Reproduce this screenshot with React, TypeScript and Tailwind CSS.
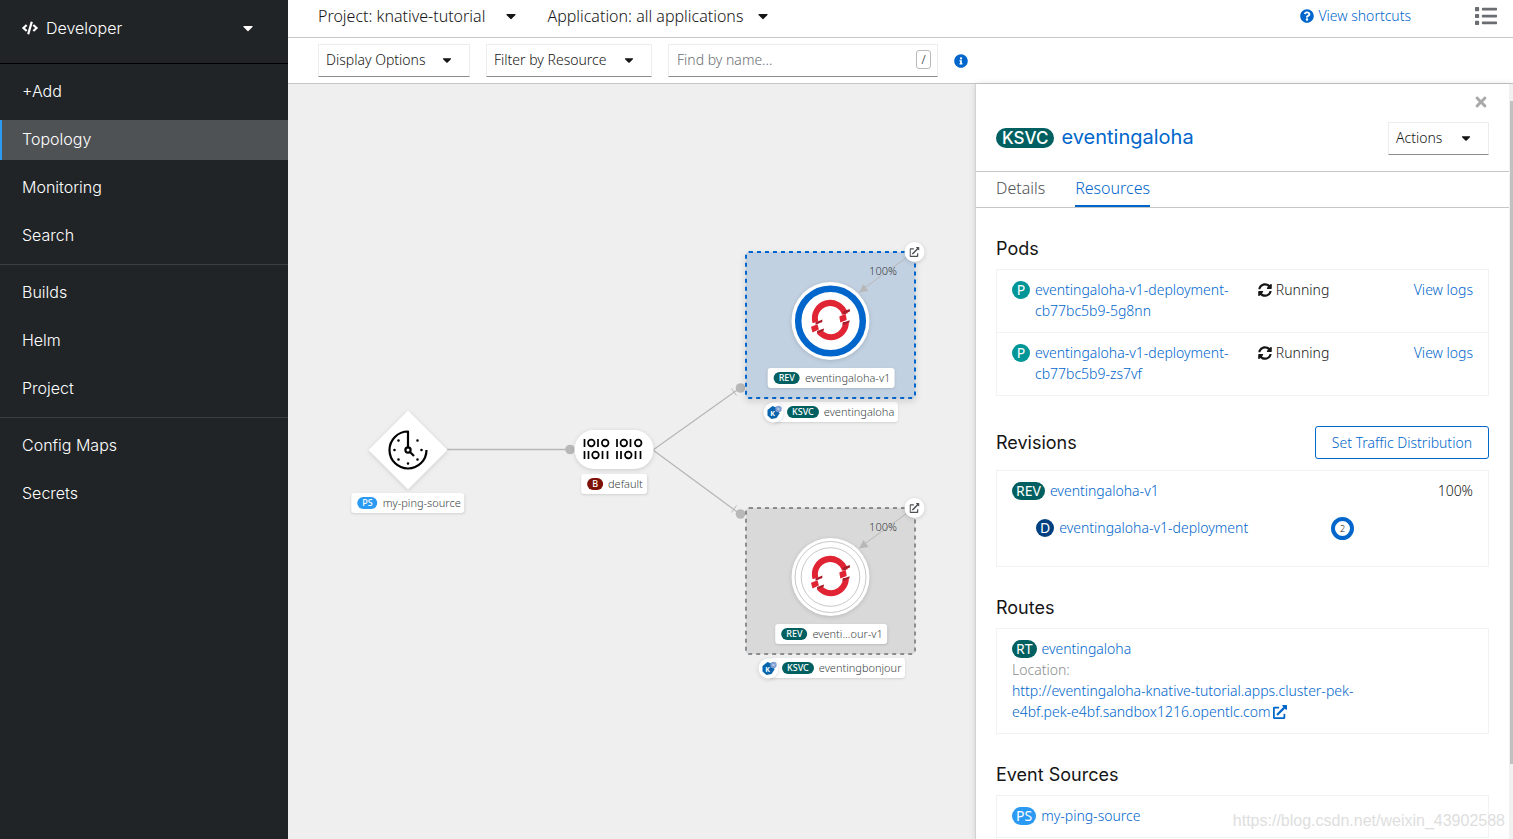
import type { ReactNode } from 'react';
import {
  FaCode,
  FaCaretDown,
  FaQuestionCircle,
  FaInfoCircle,
  FaList,
  FaTimes,
  FaSyncAlt,
  FaExternalLinkAlt,
} from 'react-icons/fa';

const navGroups = [
  ['+Add', 'Topology', 'Monitoring', 'Search'],
  ['Builds', 'Helm', 'Project'],
  ['Config Maps', 'Secrets'],
];

const pods = ['eventingaloha-v1-deployment-cb77bc5b9-5g8nn', 'eventingaloha-v1-deployment-cb77bc5b9-zs7vf'];

function Sidebar() {
  return (
    <aside className="flex w-72 shrink-0 flex-col bg-[#212427] font-['Inter',sans-serif] text-base text-white">
      <button type="button" className="flex h-16 items-center border-b border-black pb-2 pl-[22px] pr-8">
        <FaCode className="size-4" />
        <span className="ml-2">Developer</span>
        <FaCaretDown className="ml-auto size-4" />
      </button>
      <nav>
        {navGroups.map((group) => (
          <ul key={group[0]} className="flex flex-col gap-2 border-b border-[#3c3f42] py-2 last:border-0">
            {group.map((item) => (
              <li key={item}>
                <a
                  href="#"
                  className={
                    item === 'Topology'
                      ? 'flex h-10 items-center border-l-2 border-[#2b9af3] bg-[#4f5255] pb-0.5 pl-5'
                      : 'flex h-10 items-center pb-0.5 pl-[22px]'
                  }
                >
                  {item}
                </a>
              </li>
            ))}
          </ul>
        ))}
      </nav>
    </aside>
  );
}

function MenuButton({ label, className }: { label: string; className: string }) {
  return (
    <button
      type="button"
      className={`flex h-[33px] items-center justify-between border border-[#ededed] border-b-[#8a8d90] pb-0.5 pl-[7px] pr-[15px] text-sm ${className}`}
    >
      {label}
      <FaCaretDown className="size-3.5" />
    </button>
  );
}

function Header() {
  return (
    <header className="flex h-[38px] shrink-0 items-center border-b border-[#c7c7c7] pb-1.5 pl-[30px] pr-4 text-base">
      <button type="button" className="flex items-center gap-[18px]">
        Project: knative-tutorial
        <FaCaretDown className="size-4" />
      </button>
      <button type="button" className="ml-7 flex items-center gap-3">
        Application: all applications
        <FaCaretDown className="size-4" />
      </button>
      <a href="#" className="ml-auto flex items-center gap-1 text-sm text-[#0066cc]">
        <FaQuestionCircle className="size-3.5" />
        View shortcuts
      </a>
      <button type="button" aria-label="List view" className="ml-16 text-[#6a6e73]">
        <FaList className="size-[22px]" />
      </button>
    </header>
  );
}

function Toolbar() {
  return (
    <div className="flex h-[46px] shrink-0 items-center gap-4 border-b border-[#c7c7c7] pl-[30px]">
      <MenuButton label="Display Options" className="w-[152px]" />
      <MenuButton label="Filter by Resource" className="w-[166px]" />
      <div className="flex h-[33px] w-[270px] items-center border border-[#ededed] border-b-[#8a8d90] pb-0.5 pl-2 pr-1.5">
        <input
          type="text"
          aria-label="Find by name"
          placeholder="Find by name..."
          className="min-w-0 flex-1 text-sm outline-none placeholder:text-[#6a6e73]"
        />
        <kbd className="flex h-[19px] w-[15px] items-center justify-center rounded-[3px] border border-[#b8bbbe] font-['Noto_Sans',sans-serif] text-xs">
          /
        </kbd>
      </div>
      <FaInfoCircle className="size-3.5 text-[#0066cc]" />
    </div>
  );
}

function OpenShiftLogo() {
  return (
    <g>
      <path d="M-15 1.4A15 15 0 0 1 14.4-7" fill="none" stroke="#e12433" strokeWidth="6" />
      <path d="M15.4 1A15 15 0 0 1-11.4 10.4" fill="none" stroke="#e12433" strokeWidth="6" />
      <path d="M-19.5 5.8-13 3.2-11.6 8.4-18 11.4Z" fill="#e12433" />
      <path d="M8.8-4.6 15.2-7.2 16.2-1 9.8 1.4Z" fill="#e12433" />
      <path d="M-15 1.4-8.2-1.4-8.2 1-15 3.8Z" fill="#a61c2b" />
      <path d="M-13.4 10-6.6 7.4-6.6 9.6-13.4 12.2Z" fill="#a61c2b" />
      <path d="M12.4-9.4 19.4-12 19.4-9.4 12.4-6.6Z" fill="#a61c2b" />
      <path d="M12.2 1.8 19.2-.8 18.8 1.6 12.2 4.2Z" fill="#a61c2b" />
    </g>
  );
}

function KnativeIcon({ x, y }: { x: number; y: number }) {
  return (
    <g transform={`translate(${x} ${y})`}>
      <circle r="10" fill="#fff" className="drop-shadow-sm" />
      <path d="M-1-6.5 4.2-4.4 6 1 3 5.6-2 6.6-6 3-6-2.6Z" fill="#0865ad" />
      <circle cx="5" cy="-3.5" r="3.2" fill="#7f9fd3" />
      <circle cx="5" cy="-3.5" r="1.2" fill="#b9c9e8" />
      <text x="-1" y="3" textAnchor="middle" fontSize="7" fontWeight="700" fill="#fff">
        K
      </text>
    </g>
  );
}

function ServiceGroup({ y, selected = false }: { y: number; selected?: boolean }) {
  return (
    <g transform={`translate(458 ${y})`}>
      <rect
        width="169"
        height="146"
        rx="3"
        fill={selected ? '#c2d1e2' : '#d9d9d9'}
        stroke={selected ? '#0066cc' : '#8a8d90'}
        strokeWidth="2"
        strokeDasharray="4 4"
        className={selected ? 'drop-shadow-md' : ''}
      />
      <path d="M160 6 117 37" stroke="#b8b8b8" />
      <path d="M113 40.5 117.5 32 122.5 39Z" fill="#b8b8b8" />
      <text x="137" y="23" textAnchor="middle" fontSize="11" fill="#393f44">
        100%
      </text>
      <g transform="translate(84.5 69)">
        <circle r="39" fill="#fff" className="drop-shadow-sm" />
        {selected ? (
          <circle r="32.3" fill="none" stroke="#0066cc" strokeWidth="6.5" />
        ) : (
          <>
            <circle r="35.5" fill="none" stroke="#c8c8c8" />
            <circle r="29.3" fill="none" stroke="#c8c8c8" />
          </>
        )}
        <OpenShiftLogo />
      </g>
      <circle cx="168.5" r="10" fill="#fff" className="drop-shadow-sm" />
      <FaExternalLinkAlt x="163.5" y="-5" size={10} color="#4f5255" />
    </g>
  );
}

function NodeLabel({
  kind,
  name,
  color,
  className,
}: {
  kind: string;
  name: string;
  color: string;
  className: string;
}) {
  return (
    <div
      className={`absolute flex h-5 items-center gap-[5px] whitespace-nowrap rounded-[3px] bg-white pr-1 text-[11px] text-[#393f44] shadow-sm ${className}`}
    >
      <span className={`flex h-3 items-center rounded-full px-[5px] text-[9px] font-medium text-white ${color}`}>
        {kind}
      </span>
      {name}
    </div>
  );
}

function Topology() {
  return (
    <section className="relative min-w-0 flex-1 overflow-hidden bg-[#efefef]">
      <NodeLabel kind="KSVC" name="eventingaloha" color="bg-[#005f60]" className="left-[485px] top-[318px] pl-3.5" />
      <NodeLabel kind="KSVC" name="eventingbonjour" color="bg-[#005f60]" className="left-[480px] top-[574px] pl-3.5" />
      <svg className="absolute inset-0 size-full">
        <g stroke="#b8b8b8" fill="none">
          <path d="M159 365.5H282" strokeWidth="1.5" />
          <path d="M452 304 365 366 452 430" strokeWidth="1.3" />
          <path d="M443.5 304.5 448.5 311.5M443.5 428.5 448.5 421.5" />
        </g>
        <circle cx="282" cy="365.5" r="4.8" fill="#b8b8b8" />
        <circle cx="452.5" cy="304" r="4.8" fill="#b8b8b8" />
        <circle cx="452.5" cy="430" r="4.8" fill="#b8b8b8" />

        <path d="M120 326.5 159.5 366 120 405.5 80.5 366Z" fill="#fff" className="drop-shadow-sm" />
        <g transform="translate(120 366)" fill="none" stroke="#000" strokeWidth="2.2">
          <path d="M0-3V-18.5A18.5 18.5 0 1 0 18.5 0" strokeLinejoin="round" />
          <circle r="2.6" />
          <path d="M2 2 6 6" />
          <path
            d="M9.5-9.5h0M13.5 0h0M9.5 9.5h0M0 13.5h0M-9.5 9.5h0M-13.5 0h0M-9.5-9.5h0"
            strokeWidth="2.6"
            strokeLinecap="round"
          />
        </g>

        <rect x="286.5" y="346" width="79" height="39" rx="19.5" fill="#fff" className="drop-shadow-sm" />
        {/* broker: two rows of bits */}
        <g fill="none" stroke="#000" strokeWidth="1.7">
          <path d="M296.5 355v8M310 355v8M329 355v8M342.5 355v8" />
          <circle cx="303.3" cy="359" r="3.3" />
          <circle cx="317.2" cy="359" r="3.3" />
          <circle cx="335.8" cy="359" r="3.3" />
          <circle cx="350.2" cy="359" r="3.3" />
          <path d="M296.5 367v8M300.5 367v8M314.5 367v8M319.5 367v8M329 367v8M333 367v8M347.5 367v8M352.5 367v8" />
          <circle cx="307.5" cy="371" r="3.3" />
          <circle cx="340.3" cy="371" r="3.3" />
        </g>

        <ServiceGroup y={168} selected />
        <ServiceGroup y={424} />
        <KnativeIcon x={485.5} y={328.5} />
        <KnativeIcon x={480.5} y={584.5} />
      </svg>
      <NodeLabel
        kind="PS"
        name="my-ping-source"
        color="bg-[#2b9af3]"
        className="left-[120px] top-[409px] -translate-x-1/2 pl-1.5"
      />
      <NodeLabel
        kind="B"
        name="default"
        color="bg-[#7d1007]"
        className="left-[326px] top-[390px] -translate-x-1/2 pl-1.5"
      />
      <NodeLabel
        kind="REV"
        name="eventingaloha-v1"
        color="bg-[#005f60]"
        className="left-[543px] top-[284px] -translate-x-1/2 pl-1.5"
      />
      <NodeLabel
        kind="REV"
        name="eventi...our-v1"
        color="bg-[#005f60]"
        className="left-[543px] top-[540px] -translate-x-1/2 pl-1.5"
      />
    </section>
  );
}

function ResourceLink({ kind, name, color }: { kind: string; name: string; color: string }) {
  return (
    <div className="flex items-start gap-[5px]">
      <span
        className={`mt-0.5 flex h-[18px] min-w-[18px] shrink-0 items-center justify-center rounded-full px-1 pb-0.5 font-normal text-white ${color}`}
      >
        {kind}
      </span>
      <a href="#" className="text-[#0066cc]">
        {name}
      </a>
    </div>
  );
}

function Section({ title, children }: { title: string; children: ReactNode }) {
  return (
    <section className="mt-[30px]">
      <h3 className="mb-2.5 font-['Inter',sans-serif] text-lg/[21px] font-normal">{title}</h3>
      <div className="border border-[#f2f2f2]">{children}</div>
    </section>
  );
}

function SidePanel() {
  return (
    <aside className="relative z-10 flex w-[538px] shrink-0 overflow-hidden border-l border-[#d2d2d2] bg-white shadow-[0_0_6px_rgba(0,0,0,0.12)]">
      <div className="min-w-0 flex-1 text-sm/[21px]">
        <div className="flex justify-end px-5 pt-2.5">
          <button type="button" aria-label="Close" className="text-[#a8a8a8]">
            <FaTimes className="size-4" />
          </button>
        </div>
        <div className="flex items-center justify-between border-b border-[#c7c7c7] px-5 pb-4 pt-3">
          <h2 className="flex items-center gap-[7px] pb-0.5 font-['Inter',sans-serif] text-xl/7 font-normal">
            <span className="flex h-5 items-center rounded-full bg-[#005f60] px-1.5 pt-px text-[17px] font-medium text-white">
              KSVC
            </span>
            <a href="#" className="pb-0.5 text-[#0066cc]">
              eventingaloha
            </a>
          </h2>
          <MenuButton label="Actions" className="w-[101px]" />
        </div>
        <div role="tablist" className="flex h-9 gap-[30px] border-b border-[#c7c7c7] px-5 text-base">
          <button
            type="button"
            role="tab"
            aria-selected="false"
            className="border-b-2 border-transparent pb-0.5 text-[#4f5255]"
          >
            Details
          </button>
          <button
            type="button"
            role="tab"
            aria-selected="true"
            className="border-b-2 border-[#0066cc] pb-0.5 text-[#0066cc]"
          >
            Resources
          </button>
        </div>
        <div className="px-5">
          <Section title="Pods">
            {pods.map((pod) => (
              <div
                key={pod}
                className="grid grid-cols-[8fr_5fr_2fr] border-b border-[#f2f2f2] px-[15px] pb-[11px] pt-[9px] last:border-0"
              >
                <div className="pr-4">
                  <ResourceLink kind="P" name={pod} color="bg-[#009596]" />
                </div>
                <span className="flex h-[21px] items-center gap-1">
                  <FaSyncAlt className="size-3.5" />
                  Running
                </span>
                <a href="#" className="justify-self-end whitespace-nowrap text-[#0066cc]">
                  View logs
                </a>
              </div>
            ))}
          </Section>

          <section className="mt-[30px]">
            <div className="mb-[11px] flex items-center justify-between">
              <h3 className="font-['Inter',sans-serif] text-lg/[21px] font-normal">Revisions</h3>
              <button
                type="button"
                className="h-[33px] rounded-[3px] border border-[#0066cc] px-4 text-[#0066cc]"
              >
                Set Traffic Distribution
              </button>
            </div>
            <div className="border border-[#f2f2f2] px-[15px] pb-[26px] pt-[9px]">
              <div className="flex justify-between">
                <ResourceLink kind="REV" name="eventingaloha-v1" color="bg-[#005f60]" />
                <span>100%</span>
              </div>
              <div className="mt-4 grid grid-cols-[9fr_4fr]">
                <div className="pl-6">
                  <ResourceLink kind="D" name="eventingaloha-v1-deployment" color="bg-[#004080]" />
                </div>
                <span className="flex size-[23px] items-center justify-center rounded-full border-4 border-[#0066cc] text-[9px]">
                  2
                </span>
              </div>
            </div>
          </section>

          <Section title="Routes">
            <div className="px-[15px] pb-[11px] pt-[9px]">
              <ResourceLink kind="RT" name="eventingaloha" color="bg-[#005f60]" />
              <p className="text-[#8a8d90]">Location:</p>
              <a href="#" className="block max-w-[360px] text-[#0066cc]">
                http://eventingaloha-knative-tutorial.apps.cluster-pek-e4bf.pek-e4bf.sandbox1216.opentlc.com
                <FaExternalLinkAlt className="mb-0.5 ml-0.5 inline size-3.5" />
              </a>
            </div>
          </Section>

          <Section title="Event Sources">
            <div className="px-[15px] pb-[11px] pt-[9px]">
              <ResourceLink kind="PS" name="my-ping-source" color="bg-[#2b9af3]" />
            </div>
          </Section>
        </div>
      </div>
      <div className="w-1 shrink-0 bg-[#f1f1f1] pl-px pt-[17px]">
        <div className="h-[663px] bg-[#c1c1c1]" />
      </div>
    </aside>
  );
}

export default function App() {
  return (
    <div className="relative flex h-screen overflow-hidden bg-white font-['Noto_Sans',sans-serif] font-light text-[#151515]">
      <Sidebar />
      <main className="flex min-w-0 flex-1 flex-col">
        <Header />
        <Toolbar />
        <div className="flex min-h-0 flex-1">
          <Topology />
          <SidePanel />
        </div>
      </main>
      <span className="pointer-events-none absolute bottom-1.5 right-2 z-20 font-['Liberation_Sans',sans-serif] text-base font-normal text-[#dedede]">
        https://blog.csdn.net/weixin_43902588
      </span>
    </div>
  );
}
